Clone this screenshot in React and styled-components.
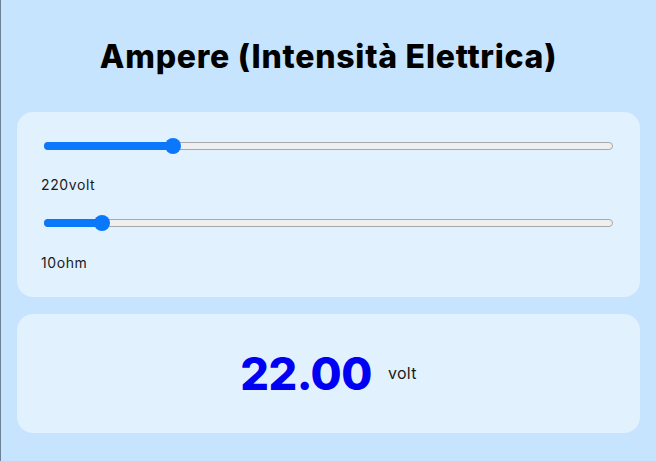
import React, { useState } from "react";
import styled, { createGlobalStyle } from "styled-components";

const GlobalStyle = createGlobalStyle`
  html, body {
    margin: 0;
    padding: 0;
    background: #c7e4fe;
  }
  body {
    font-family: Inter, "Open Sans", "Liberation Sans", sans-serif;
    color: #111;
  }
`;

const Page = styled.div`
  min-height: 461px;
  box-sizing: border-box;
  border-left: 1px solid #6f8196;
  padding: 0 16px 20px 16px;
`;

const Title = styled.h1`
  margin: 0;
  height: 112px;
  display: flex;
  align-items: center;
  justify-content: center;
  font-size: 32px;
  font-weight: 800;
  letter-spacing: 0.75px;
  color: #000;
`;

const Card = styled.section`
  background: #e2f1fe;
  border-radius: 16px;
  box-sizing: border-box;
  padding: ${(p) => p.$padding || "24px"};
  display: flex;
  flex-direction: column;
  height: ${(p) => p.$height}px;
  & + & {
    margin-top: 17px;
  }
`;

const SliderRow = styled.div`
  position: relative;
  height: 20px;
  margin: 0 3px;
  display: flex;
  align-items: center;
`;

const Track = styled.div`
  position: relative;
  flex: 1;
  height: 8px;
  box-sizing: border-box;
  border: 1px solid #a8a8a8;
  border-radius: 4px;
  background: #efefef;
`;

const Fill = styled.div`
  position: absolute;
  left: -1px;
  top: -1px;
  bottom: -1px;
  background: #0b77fb;
  border-radius: 4px;
`;

const Thumb = styled.div`
  position: absolute;
  top: 50%;
  width: 16px;
  height: 16px;
  margin: -8px 0 0 -8px;
  border-radius: 50%;
  background: #0b77fb;
`;

const RangeInput = styled.input`
  position: absolute;
  inset: 0;
  width: 100%;
  height: 100%;
  margin: 0;
  opacity: 0;
  cursor: pointer;
`;

const Label = styled.p`
  margin: ${(p) => p.$margin};
  font-size: 14px;
  line-height: 21px;
  letter-spacing: 0.6px;
  color: #1a1a1a;
`;

const Result = styled.div`
  flex: 1;
  display: flex;
  align-items: center;
  justify-content: center;
  gap: 16px;
`;

const Value = styled.span`
  font-size: 45px;
  font-weight: 800;
  color: #0000f2;
  letter-spacing: -0.5px;
`;

const Unit = styled.span`
  font-size: 16px;
  letter-spacing: 0.3px;
  color: #1a1a1a;
  margin-bottom: 2px;
`;

const Slider = ({ value, min, max, onChange }) => {
  const f = (value - min) / (max - min);
  const left = `calc(7px + ${f} * (100% - 14px))`;
  return (
    <SliderRow>
      <Track>
        <Fill style={{ width: `calc(${left} + 2px)` }} />
        <Thumb style={{ left }} />
      </Track>
      <RangeInput
        type="range"
        min={min}
        max={max}
        value={value}
        onChange={(e) => onChange(Number(e.target.value))}
      />
    </SliderRow>
  );
};

export default function App() {
  const [volt, setVolt] = useState(220);
  const [ohm, setOhm] = useState(10);

  return (
    <Page>
      <GlobalStyle />
      <Title>Ampere (Intensità Elettrica)</Title>
      <Card $height={185}>
        <Slider value={volt} min={1} max={1000} onChange={setVolt} />
        <Label $margin="18px 0 18px">{volt}volt</Label>
        <Slider value={ohm} min={1} max={100} onChange={setOhm} />
        <Label $margin="19px 0 0">{ohm}ohm</Label>
      </Card>
      <Card $height={119} $padding="0 24px">
        <Result>
          <Value>{(volt / ohm).toFixed(2)}</Value>
          <Unit>volt</Unit>
        </Result>
      </Card>
    </Page>
  );
}
